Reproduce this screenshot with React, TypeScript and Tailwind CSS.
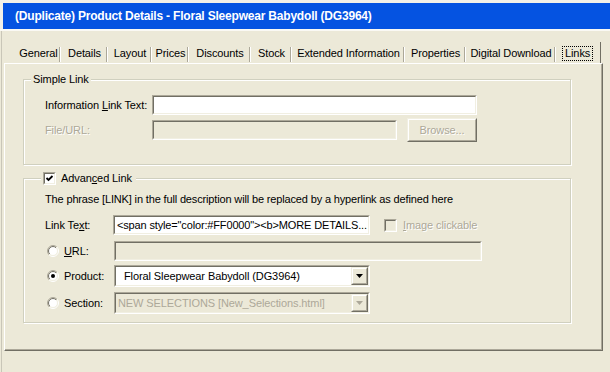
import React from "react";

const dis = "text-[#ACA899] [text-shadow:1px_1px_0_#ffffff]";

function Sunken({ className = "", bg = "bg-white", children }: { className?: string; bg?: string; children?: React.ReactNode }) {
  return (
    <div className={`border border-t-[#ACA899] border-l-[#ACA899] border-r-white border-b-white ${className}`}>
      <div className={`h-full w-full border border-t-[#716F64] border-l-[#716F64] border-r-[#F1EFE2] border-b-[#F1EFE2] ${bg} flex items-center overflow-hidden`}>
        {children}
      </div>
    </div>
  );
}

function Raised({ className = "", children }: { className?: string; children?: React.ReactNode }) {
  return (
    <div className={`border border-t-[#F1EFE2] border-l-[#F1EFE2] border-r-[#716F64] border-b-[#716F64] ${className}`}>
      <div className="h-full w-full border border-t-white border-l-white border-r-[#ACA899] border-b-[#ACA899] bg-[#ECE9D8] flex items-center justify-center">
        {children}
      </div>
    </div>
  );
}

function Radio({ checked, id }: { checked?: boolean; id: string }) {
  return (
    <svg width="12" height="12" viewBox="0 0 12 12" className="shrink-0">
      <defs>
        <linearGradient id={`o${id}`} x1="0" y1="0" x2="1" y2="1">
          <stop offset="0.5" stopColor="#ACA899" />
          <stop offset="0.5" stopColor="#FFFFFF" />
        </linearGradient>
        <linearGradient id={`i${id}`} x1="0" y1="0" x2="1" y2="1">
          <stop offset="0.5" stopColor="#716F64" />
          <stop offset="0.5" stopColor="#F1EFE2" />
        </linearGradient>
      </defs>
      <circle cx="6" cy="6" r="5.5" fill="none" stroke={`url(#o${id})`} strokeWidth="1" />
      <circle cx="6" cy="6" r="4.5" fill="#FFFFFF" stroke={`url(#i${id})`} strokeWidth="1" />
      {checked && <circle cx="6" cy="6" r="2" fill="#000" />}
    </svg>
  );
}

function Check({ checked, disabled }: { checked?: boolean; disabled?: boolean }) {
  return (
    <div className="w-[13px] h-[13px] shrink-0 border border-t-[#ACA899] border-l-[#ACA899] border-r-white border-b-white">
      <div className={`w-full h-full border border-t-[#716F64] border-l-[#716F64] border-r-[#F1EFE2] border-b-[#F1EFE2] ${disabled ? "bg-[#ECE9D8]" : "bg-white"}`}>
        {checked && (
          <svg width="9" height="9" viewBox="0 0 9 9" className="block">
            <polyline points="1.5,4 3.5,6 7.5,2" fill="none" stroke="#000" strokeWidth="1.8" />
          </svg>
        )}
      </div>
    </div>
  );
}

function Arrow({ color = "#000" }: { color?: string }) {
  return (
    <svg width="7" height="4" viewBox="0 0 7 4">
      <polygon points="0,0 7,0 3.5,4" fill={color} />
    </svg>
  );
}

const tabs: [string, number][] = [
  ["General", 45],
  ["Details", 47],
  ["Layout", 44],
  ["Prices", 37],
  ["Discounts", 62],
  ["Stock", 41],
  ["Extended Information", 113],
  ["Properties", 61],
  ["Digital Download", 90],
];

export default function App() {
  return (
    <div className="w-[610px] h-[372px] overflow-hidden bg-[#ECE9D8] font-['Liberation_Sans',Arial,sans-serif] text-[11px] leading-[13px] tracking-[-0.1px] text-black">
      <div className="pt-[3px] pl-[3px] bg-[#F3F1E8]">
        <div className="h-[26px] bg-[#0553E1] text-white font-bold text-[12px] flex items-center pl-[12px] tracking-[-0.2px]">
          (Duplicate) Product Details - Floral Sleepwear Babydoll (DG3964)
        </div>
      </div>
      <div className="h-[2px] bg-[#FAF9F4]" />
      <div className="flex h-[343px]">
        <div className="w-[1px] ml-[1px] bg-[#C9C6B8]" />
        <div className="flex-1 flex flex-col">
          <div className="h-[13px]" />
          {/* tabs */}
          <div className="flex h-[19px] pl-[14px]">
            {tabs.map(([t, w]) => (
              <div key={t} style={{ width: w }} className="flex items-center h-full">
                <div className="flex-1 text-center pl-[2px]">{t}</div>
                <div className="w-[1px] h-[15px] mt-[2px] bg-[#ACA899]" />
                <div className="w-[1px] h-[15px] mt-[2px] bg-white" />
              </div>
            ))}
            <div className="w-[45px] h-[21px] -mt-[2px] flex items-center border-r border-r-[#716F64] bg-[#ECE9D8]">
              <div className="ml-[6px] px-[2px] h-[15px] mt-[2px] flex items-center border border-dotted border-black">
                <span>Links</span>
              </div>
            </div>
          </div>
          {/* panel */}
          <div className="ml-[2px] w-[599px] h-[288px] border-t border-l border-t-white border-l-white border-r border-b border-r-[#716F64] border-b-[#716F64]">
            <div className="h-full w-full border-r border-b border-r-[#ACA899] border-b-[#ACA899] pl-[18px] pt-[15px] flex flex-col">
              {/* Simple Link */}
              <div className="relative w-[548px] h-[86px] border border-[#D0D0BF] shadow-[inset_1px_1px_0_#ffffff,1px_1px_0_#ffffff]">
                <div className="absolute -top-[7px] left-[7px] px-[2px] bg-[#ECE9D8]">Simple Link</div>
                <div className="flex items-center mt-[15px] ml-[21px] h-[20px]">
                  <div className="w-[107px]">
                    Information <span className="underline">L</span>ink Text:
                  </div>
                  <Sunken className="w-[325px] h-[20px]" />
                </div>
                <div className="flex items-center mt-[3px] ml-[21px] h-[24px]">
                  <div className={`w-[107px] ${dis}`}>File/URL:</div>
                  <Sunken className="w-[245px] h-[20px]" bg="bg-[#ECE9D8]" />
                  <Raised className="ml-[10px] w-[70px] h-[24px]">
                    <span className={dis}>Browse...</span>
                  </Raised>
                </div>
              </div>
              {/* Advanced Link */}
              <div className="relative mt-[13px] w-[548px] h-[145px] border border-[#D0D0BF] shadow-[inset_1px_1px_0_#ffffff,1px_1px_0_#ffffff]">
                <div className="absolute -top-[7px] left-[17px] pl-[2px] pr-[4px] bg-[#ECE9D8] flex items-center gap-[5px]">
                  <Check checked />
                  <span>
                    Advan<span className="underline">c</span>ed Link
                  </span>
                </div>
                <div className="ml-[21px] mt-[14px] tracking-[-0.15px]">
                  The phrase [LINK] in the full description will be replaced by a hyperlink as defined here
                </div>
                <div className="flex items-center ml-[21px] mt-[9px] h-[20px]">
                  <div className="w-[68px]">
                    Link Te<span className="underline">x</span>t:
                  </div>
                  <Sunken className="w-[257px] h-[20px]">
                    <span className="pl-[2px] whitespace-nowrap tracking-[-0.15px]">&lt;span style="color:#FF0000"&gt;&lt;b&gt;MORE DETAILS...</span>
                  </Sunken>
                  <div className="ml-[14px] flex items-center gap-[6px]">
                    <Check disabled />
                    <span className={dis}>
                      <span className="underline">I</span>mage clickable
                    </span>
                  </div>
                </div>
                <div className="flex items-center ml-[23px] mt-[6px] h-[20px]">
                  <Radio id="r1" />
                  <div className="w-[55px] pl-[5px]">
                    <span className="underline">U</span>RL:
                  </div>
                  <Sunken className="w-[368px] h-[20px]" bg="bg-[#ECE9D8]" />
                </div>
                <div className="flex items-center ml-[23px] mt-[4px] h-[22px]">
                  <Radio id="r2" checked />
                  <div className="w-[55px] pl-[5px]">Product:</div>
                  <Sunken className="w-[256px] h-[22px]">
                    <span className="flex-1 pl-[8px] whitespace-nowrap">Floral Sleepwear Babydoll (DG3964)</span>
                    <Raised className="w-[17px] h-full">
                      <Arrow />
                    </Raised>
                  </Sunken>
                </div>
                <div className="flex items-center ml-[23px] mt-[5px] h-[22px]">
                  <Radio id="r3" />
                  <div className="w-[55px] pl-[5px]">Section:</div>
                  <Sunken className="w-[256px] h-[22px]" bg="bg-[#ECE9D8]">
                    <span className="flex-1 pl-[2px] whitespace-nowrap overflow-hidden text-[#ACA899]">NEW SELECTIONS [New_Selections.html]</span>
                    <Raised className="w-[17px] h-full">
                      <Arrow color="#ACA899" />
                    </Raised>
                  </Sunken>
                </div>
              </div>
            </div>
          </div>
        </div>
      </div>
    </div>
  );
}
